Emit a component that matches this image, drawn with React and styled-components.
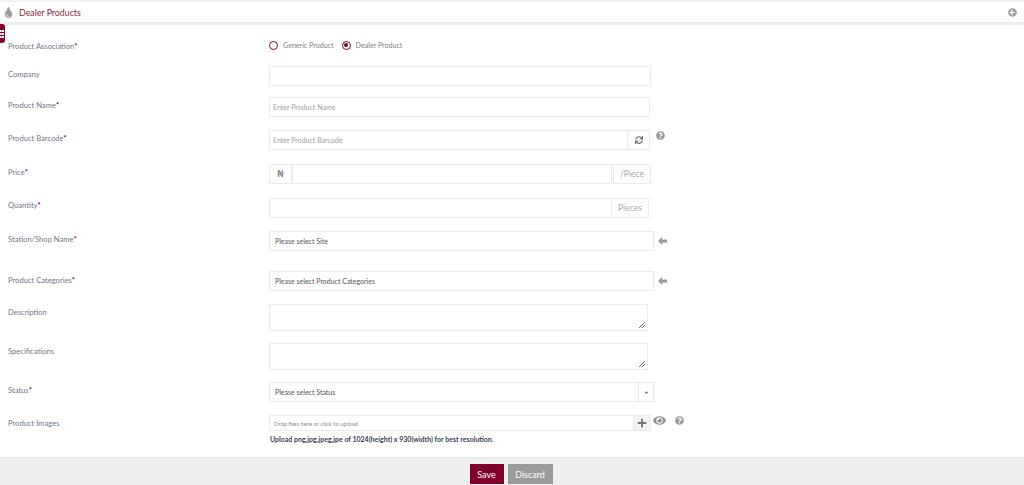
import React from "react";
import styled, { createGlobalStyle } from "styled-components";
import { FaTint, FaSync, FaQuestionCircle, FaEye, FaPlus, FaArrowCircleLeft, FaCaretDown } from "react-icons/fa";

const GlobalStyle = createGlobalStyle`
  html, body {
    margin: 0;
    padding: 0;
    background: #fff;
    overflow: hidden;
  }
  * {
    box-sizing: border-box;
  }
`;

const Page = styled.div`
  position: relative;
  height: 485px;
  display: flex;
  flex-direction: column;
  font-family: Lato, "Liberation Sans", sans-serif;
  font-size: 7.6px;
  color: #6b7280;
`;

const Header = styled.div`
  height: 25px;
  border-top: 2px solid #f2f2f2;
  border-bottom: 3px solid #eeeeee;
  display: flex;
  align-items: center;
  padding: 0 7px 0 3px;
  background: #fff;
`;

const Title = styled.span`
  flex: 1;
  margin-left: 5px;
  font-size: 8.8px;
  color: #8b1f42;
`;

const SideTab = styled.div`
  position: absolute;
  left: 0;
  top: 24px;
  width: 5px;
  height: 19px;
  background: #80002a;
  border-radius: 0 3px 3px 0;
  display: flex;
  flex-direction: column;
  justify-content: center;
  gap: 1px;
  padding-top: 1px;
`;

const TabDot = styled.span`
  width: 4px;
  height: 2px;
  background: linear-gradient(to right, #fff 0 1.5px, #c9a0ae 1.5px 2px, #fff 2px 4px);
`;

const Form = styled.div`
  flex: 1;
`;

const Row = styled.div`
  display: flex;
  align-items: flex-start;
  height: ${(p) => p.$h}px;
  margin-top: ${(p) => p.$mt}px;
`;

const Label = styled.div`
  width: 269px;
  flex: none;
  padding-left: 8px;
  padding-top: ${(p) => p.$pt || 0}px;
  line-height: 12px;
  color: #6f7787;
`;

const Req = styled.span`
  color: #80002a;
  font-weight: 700;
`;

const Radios = styled.div`
  display: flex;
  align-items: center;
  gap: 8px;
  height: 12px;
  padding-left: 0;
  color: #808080;
  font-size: 7.1px;
`;

const RadioItem = styled.span`
  display: flex;
  align-items: center;
  gap: 5px;
`;

const RadioDot = styled.span`
  width: 9px;
  height: 9px;
  border: 1.7px solid #80002a;
  border-radius: 50%;
  display: flex;
  align-items: center;
  justify-content: center;
  &::after {
    content: "";
    width: 4px;
    height: 4px;
    border-radius: 50%;
    background: ${(p) => (p.$on ? "#80002a" : "transparent")};
  }
`;

const Field = styled.div`
  display: flex;
  align-items: center;
  width: ${(p) => p.$w}px;
  height: ${(p) => p.$h || 20}px;
  padding-left: ${(p) => (p.$dark ? 5 : 3)}px;
  border: 1px solid #ebebeb;
  background: #fff;
  color: ${(p) => (p.$dark ? "#555" : "#a0a0a0")};
  font-size: 7px;
  flex: none;
  position: relative;
`;

const DropText = styled.span`
  padding-left: 1px;
  font-size: 5.9px;
  color: #8a8a8a;
`;

const Addon = styled.div`
  display: flex;
  align-items: center;
  justify-content: center;
  flex: none;
  width: ${(p) => p.$w}px;
  height: ${(p) => p.$h || 20}px;
  margin-left: ${(p) => p.$ml || 0}px;
  border: 1px solid #ebebeb;
  border-left: ${(p) => (p.$ml || p.$first ? "1px solid #ebebeb" : "none")};
  color: ${(p) => p.$c || "#a8a8a8"};
  font-size: 8.6px;
  font-weight: ${(p) => p.$bold || 400};
  background: ${(p) => p.$bg || "#fff"};
`;

const Resize = styled.svg`
  position: absolute;
  right: 1px;
  bottom: 1px;
`;

const SideIcon = styled.span`
  display: flex;
  color: ${(p) => p.$c || "#999"};
  font-size: ${(p) => p.$s || 9}px;
  margin-left: ${(p) => p.$ml}px;
  margin-top: ${(p) => p.$mt || 0}px;
`;

const Column = styled.div`
  display: flex;
  flex-direction: column;
`;

const Hint = styled.div`
  margin-top: 2px;
  padding-left: 1px;
  font-size: 7px;
  line-height: 12px;
  font-weight: 700;
  color: #3a4250;
`;

const Footer = styled.div`
  height: 28px;
  border-top: 1px solid #e4e4e4;
  background: #efefef;
  display: flex;
  justify-content: center;
  align-items: flex-start;
  gap: 4px;
  padding-top: 6px;
  padding-right: 2px;
`;

const Button = styled.button`
  width: ${(p) => p.$w}px;
  height: 20px;
  padding: 0;
  border: 1px solid ${(p) => p.$bg};
  background: ${(p) => p.$bg};
  color: #fff;
  font-family: inherit;
  font-size: 9px;
`;

const ResizeGrip = () => (
  <Resize width="8" height="8" viewBox="0 0 8 8">
    <path d="M1 7L7 1M4 7L7 4" stroke="#666" strokeWidth="1" fill="none" />
  </Resize>
);

// solid stubby arrow, the package one is too thin at this size
const BackArrow = () => (
  <SideIcon $ml={4} $mt={6} $c="#999">
    <svg width="9" height="8" viewBox="0 0 9 8">
      <path d="M0 4L4.2 0V2.4H9V5.6H4.2V8Z" fill="currentColor" />
    </svg>
  </SideIcon>
);

const Star = () => <Req>*</Req>;

export default function App() {
  return (
    <>
      <GlobalStyle />
      <Page>
        <Header>
          <SideIcon $s={11} $ml={0} $c="#a0a0a0">
            <FaTint />
          </SideIcon>
          <Title>Dealer Products</Title>
          <SideIcon $s={9} $ml={0} $c="#9a9ea3">
            <FaArrowCircleLeft />
          </SideIcon>
        </Header>
        <SideTab>
          <TabDot />
          <TabDot />
          <TabDot />
        </SideTab>
        <Form>
          <Row $h={12} $mt={14}>
            <Label $pt={1}>
              Product Association<Star />
            </Label>
            <Radios>
              <RadioItem>
                <RadioDot />
                Generic Product
              </RadioItem>
              <RadioItem>
                <RadioDot $on />
                Dealer Product
              </RadioItem>
            </Radios>
          </Row>
          <Row $h={20} $mt={15}>
            <Label $pt={2}>Company</Label>
            <Field $w={382} />
          </Row>
          <Row $h={20} $mt={11}>
            <Label $pt={2}>
              Product Name<Star />
            </Label>
            <Field $w={381}>Enter Product Name</Field>
          </Row>
          <Row $h={20} $mt={13}>
            <Label $pt={2}>
              Product Barcode<Star />
            </Label>
            <Field $w={359}>Enter Product Barcode</Field>
            <Addon $w={22} $c="#666">
              <FaSync size={8} />
            </Addon>
            <SideIcon $ml={6} $mt={1}>
              <FaQuestionCircle />
            </SideIcon>
          </Row>
          <Row $h={20} $mt={14}>
            <Label $pt={2}>
              Price<Star />
            </Label>
            <Addon $w={23} $c="#777" $bold={700} $first>
              ₦
            </Addon>
            <Field $w={320} />
            <Addon $w={38} $ml={1}>
              /Piece
            </Addon>
          </Row>
          <Row $h={20} $mt={14}>
            <Label $pt={1}>
              Quantity<Star />
            </Label>
            <Field $w={343} />
            <Addon $w={37}>Pieces</Addon>
          </Row>
          <Row $h={20} $mt={13}>
            <Label $pt={2}>
              Station/Shop Name<Star />
            </Label>
            <Field $w={385} $dark>
              Please select Site
            </Field>
            <BackArrow />
          </Row>
          <Row $h={20} $mt={20}>
            <Label $pt={3}>
              Product Categories<Star />
            </Label>
            <Field $w={385} $dark>
              Please select Product Categories
            </Field>
            <BackArrow />
          </Row>
          <Row $h={27} $mt={13}>
            <Label $pt={2}>Description</Label>
            <Field $w={379} $h={27}>
              <ResizeGrip />
            </Field>
          </Row>
          <Row $h={27} $mt={12}>
            <Label $pt={2}>Specifications</Label>
            <Field $w={379} $h={27}>
              <ResizeGrip />
            </Field>
          </Row>
          <Row $h={20} $mt={12}>
            <Label $pt={2}>
              Status<Star />
            </Label>
            <Field $w={370} $dark>
              Please select Status
            </Field>
            <Addon $w={15} $c="#777">
              <FaCaretDown size={7} />
            </Addon>
          </Row>
          <Row $h={34} $mt={13}>
            <Label $pt={2}>Product Images</Label>
            <Column>
              <Row $h={16} $mt={0}>
                <Field $w={365} $h={16}>
                  <DropText>Drop files here or click to upload</DropText>
                </Field>
                <Addon $w={17} $h={16} $c="#6f7780" $bg="#f2f2f2">
                  <FaPlus size={10} />
                </Addon>
                <SideIcon $s={13} $ml={2} $mt={-1} $c="#8a8a8a">
                  <FaEye />
                </SideIcon>
                <SideIcon $ml={9} $mt={1}>
                  <FaQuestionCircle />
                </SideIcon>
              </Row>
              <Hint>Upload png,jpg,jpeg,jpe of 1024(height) x 930(width) for best resolution.</Hint>
            </Column>
          </Row>
        </Form>
        <Footer>
          <Button $w={34} $bg="#80002a">
            Save
          </Button>
          <Button $w={45} $bg="#9a9a9a">
            Discard
          </Button>
        </Footer>
      </Page>
    </>
  );
}
